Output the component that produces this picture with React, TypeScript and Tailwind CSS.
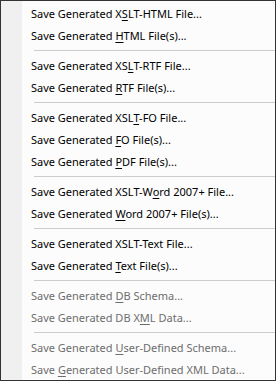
import React from 'react';

type Part = string | { u: string };

interface MenuEntry {
  parts: Part[];
  disabled?: boolean;
}

// null marks a separator
const entries: (MenuEntry | null)[] = [
  { parts: ['Save Generated X', { u: 'S' }, 'LT-HTML File...'] },
  { parts: ['Save Generated ', { u: 'H' }, 'TML File(s)...'] },
  null,
  { parts: ['Save Generated XS', { u: 'L' }, 'T-RTF File...'] },
  { parts: ['Save Generated ', { u: 'R' }, 'TF File(s)...'] },
  null,
  { parts: ['Save Generated XSL', { u: 'T' }, '-FO File...'] },
  { parts: ['Save Generated ', { u: 'F' }, 'O File(s)...'] },
  { parts: ['Save Generated ', { u: 'P' }, 'DF File(s)...'] },
  null,
  { parts: ['Save Generated XSLT-W', { u: 'o' }, 'rd 2007+ File...'] },
  { parts: ['Save Generated ', { u: 'W' }, 'ord 2007+ File(s)...'] },
  null,
  { parts: ['Save Generated XSLT-Text File...'] },
  { parts: ['Save Generated ', { u: 'T' }, 'ext File(s)...'] },
  null,
  { parts: ['Save Generated ', { u: 'D' }, 'B Schema...'], disabled: true },
  { parts: ['Save Generated DB X', { u: 'M' }, 'L Data...'], disabled: true },
  null,
  { parts: ['Save Generated ', { u: 'U' }, 'ser-Defined Schema...'], disabled: true },
  { parts: ['Save ', { u: 'G' }, 'enerated User-Defined XML Data...'], disabled: true },
];

const MenuItem: React.FC<{ entry: MenuEntry }> = ({ entry }) => (
  <div
    className={`h-[22px] flex items-center pl-[9px] whitespace-pre ${
      entry.disabled ? 'text-[#6d6d6d]' : 'text-black'
    }`}
  >
    <span>
      {entry.parts.map((p, i) =>
        typeof p === 'string' ? (
          p
        ) : (
          <span key={i} className="underline underline-offset-[2px]">
            {p.u}
          </span>
        )
      )}
    </span>
  </div>
);

export default function App() {
  return (
    <div
      className="w-[276px] h-[381px] border border-[#333333] bg-[#fcfcfc] flex overflow-hidden text-[11px] leading-none"
      style={{ fontFamily: '"Noto Sans", "Open Sans", sans-serif' }}
    >
      {/* icon gutter */}
      <div className="w-[21px] shrink-0 bg-[#f0f0f0]" />
      <div className="flex-1 flex flex-col pt-[1px]">
        {entries.map((e, i) =>
          e ? (
            <MenuItem key={i} entry={e} />
          ) : (
            <div key={i} className="h-[8px] flex items-center pl-[12px]">
              <div className="h-px w-full bg-[#cccccc]" />
            </div>
          )
        )}
      </div>
    </div>
  );
}
